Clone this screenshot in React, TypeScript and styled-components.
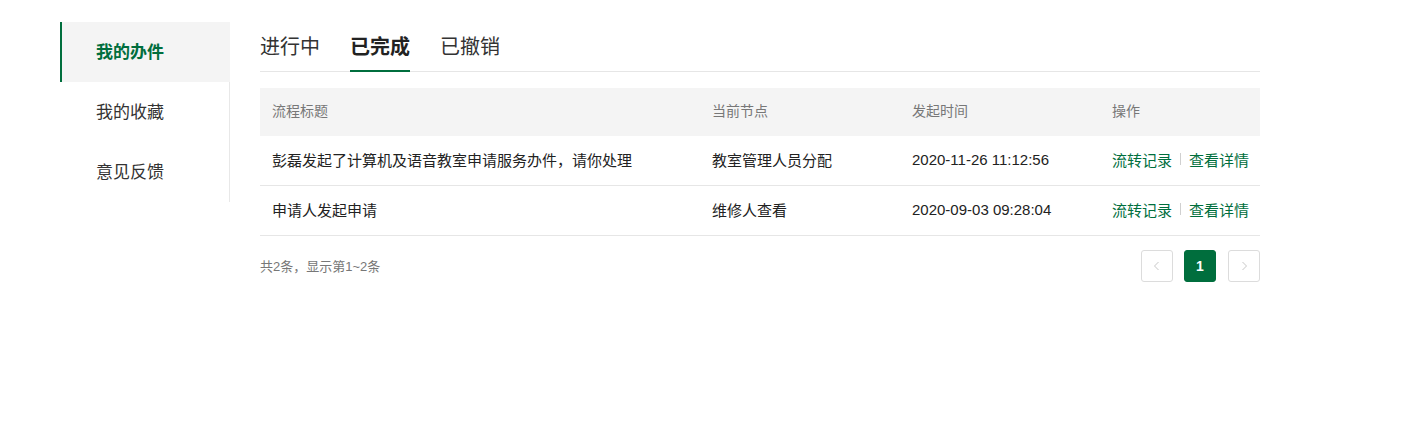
import React, { useState } from 'react';
import styled, { createGlobalStyle } from 'styled-components';

const GREEN = '#006e3d';

const GlobalStyle = createGlobalStyle`
  html, body {
    margin: 0;
    padding: 0;
    background: #fff;
    font-family: "Liberation Sans", "Noto Sans CJK SC", Arial, sans-serif;
    color: #333;
  }
`;

const Page = styled.div`
  display: flex;
  align-items: flex-start;
  gap: 30px;
  padding: 22px 0 0 60px;
  width: 1423px;
  height: 446px;
  box-sizing: border-box;
`;

const Sidebar = styled.nav`
  width: 170px;
  box-sizing: border-box;
  display: flex;
  flex-direction: column;
  border-right: 1px solid #e8e8e8;
`;

const SideItem = styled.div<{ $active?: boolean }>`
  height: 60px;
  box-sizing: border-box;
  display: flex;
  align-items: center;
  padding: 0 0 4px 34px;
  margin-right: ${({ $active }) => ($active ? '-1px' : '0')};
  font-size: 17px;
  font-weight: ${({ $active }) => ($active ? 700 : 400)};
  color: ${({ $active }) => ($active ? GREEN : '#333')};
  background: ${({ $active }) => ($active ? '#f4f4f4' : 'transparent')};
  border-left: 2px solid ${({ $active }) => ($active ? GREEN : 'transparent')};
  cursor: pointer;
`;

const Main = styled.main`
  width: 1000px;
  display: flex;
  flex-direction: column;
`;

const Tabs = styled.div`
  display: flex;
  gap: 30px;
  border-bottom: 1px solid #e6e6e6;
  margin-bottom: 16px;
`;

const Tab = styled.div<{ $active?: boolean }>`
  height: 50px;
  display: flex;
  align-items: center;
  padding-bottom: 1px;
  box-sizing: border-box;
  font-size: 20px;
  font-weight: ${({ $active }) => ($active ? 700 : 400)};
  color: ${({ $active }) => ($active ? '#222' : '#333')};
  border-bottom: 2px solid ${({ $active }) => ($active ? GREEN : 'transparent')};
  margin-bottom: -1px;
  cursor: pointer;
`;

const Table = styled.div`
  display: grid;
  grid-template-columns: 440px 200px 200px 160px;
`;

const HeadCell = styled.div`
  height: 48px;
  box-sizing: border-box;
  display: flex;
  align-items: center;
  padding: 0 0 4px 12px;
  background: #f4f4f4;
  font-size: 14px;
  color: #777;
`;

const Cell = styled.div`
  height: 50px;
  display: flex;
  align-items: center;
  padding: 0 0 3px 12px;
  font-size: 15px;
  color: #222;
  border-bottom: 1px solid #e6e6e6;
  box-sizing: border-box;
`;

const Link = styled.a`
  color: ${GREEN};
  text-decoration: none;
  cursor: pointer;
`;

const Divider = styled.span`
  display: inline-block;
  width: 1px;
  height: 12px;
  background: #d0d0d0;
  margin: 0 8px;
`;

const Footer = styled.div`
  display: flex;
  align-items: center;
  justify-content: space-between;
  margin-top: 14px;
`;

const Summary = styled.span`
  font-size: 13px;
  color: #777;
  padding-bottom: 2px;
`;

const Pager = styled.div`
  display: flex;
  gap: 11px;
`;

const PageBtn = styled.button<{ $active?: boolean }>`
  width: 32px;
  height: 32px;
  box-sizing: border-box;
  border-radius: 3px;
  border: 1px solid ${({ $active }) => ($active ? GREEN : '#dcdcdc')};
  background: ${({ $active }) => ($active ? GREEN : '#fff')};
  color: ${({ $active }) => ($active ? '#fff' : '#c0c0c0')};
  font-family: inherit;
  font-size: 14px;
  font-weight: 700;
  display: flex;
  align-items: center;
  justify-content: center;
  padding: 0;
  cursor: pointer;
  &:last-child {
    margin-left: 1px;
  }
`;

const Chevron = ({ dir }: { dir: 'left' | 'right' }) => (
  <svg width="12" height="12" viewBox="0 0 12 12" fill="none">
    <path
      d={dir === 'left' ? 'M7.5 2 3.5 6l4 4' : 'M4.5 2l4 4-4 4'}
      stroke="#c8c8c8"
      strokeWidth="1"
    />
  </svg>
);

const rows = [
  {
    title: '彭磊发起了计算机及语音教室申请服务办件，请你处理',
    node: '教室管理人员分配',
    time: '2020-11-26 11:12:56',
  },
  { title: '申请人发起申请', node: '维修人查看', time: '2020-09-03 09:28:04' },
];

const App = () => {
  const [tab, setTab] = useState(1);
  const tabs = ['进行中', '已完成', '已撤销'];
  return (
    <>
      <GlobalStyle />
      <Page>
        <Sidebar>
          <SideItem $active>我的办件</SideItem>
          <SideItem>我的收藏</SideItem>
          <SideItem>意见反馈</SideItem>
        </Sidebar>
        <Main>
          <Tabs>
            {tabs.map((t, i) => (
              <Tab key={t} $active={tab === i} onClick={() => setTab(i)}>
                {t}
              </Tab>
            ))}
          </Tabs>
          <Table>
            <HeadCell>流程标题</HeadCell>
            <HeadCell>当前节点</HeadCell>
            <HeadCell>发起时间</HeadCell>
            <HeadCell>操作</HeadCell>
            {rows.map((r) => (
              <React.Fragment key={r.time}>
                <Cell>{r.title}</Cell>
                <Cell>{r.node}</Cell>
                <Cell>{r.time}</Cell>
                <Cell>
                  <Link>流转记录</Link>
                  <Divider />
                  <Link>查看详情</Link>
                </Cell>
              </React.Fragment>
            ))}
          </Table>
          <Footer>
            <Summary>共2条，显示第1~2条</Summary>
            <Pager>
              <PageBtn>
                <Chevron dir="left" />
              </PageBtn>
              <PageBtn $active>1</PageBtn>
              <PageBtn>
                <Chevron dir="right" />
              </PageBtn>
            </Pager>
          </Footer>
        </Main>
      </Page>
    </>
  );
};

export default App;
